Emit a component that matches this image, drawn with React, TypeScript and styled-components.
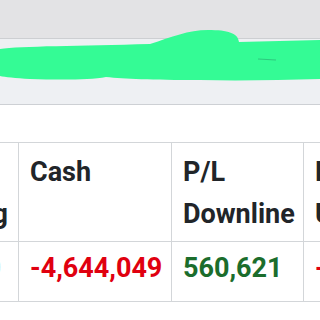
import styled, { createGlobalStyle } from 'styled-components';

const GlobalStyle = createGlobalStyle`
  html, body {
    margin: 0;
    padding: 0;
    background: #ffffff;
  }
  body {
    width: 320px;
    height: 320px;
    overflow: hidden;
    font-family: Roboto, 'Liberation Sans', sans-serif;
  }
`;

const Page = styled.div`
  width: 320px;
  height: 320px;
  overflow: hidden;
  background: #ffffff;
`;

const Header = styled.header`
  position: relative;
`;

const TopBand = styled.div`
  height: 38px;
  background: #e3e3e5;
  border-bottom: 1px solid #cdcfd2;
`;

const SubBand = styled.div`
  height: 65px;
  background: #eef0f3;
  border-bottom: 1px solid #cdd0d4;
`;

// redaction scribble drawn over the header
const Scribble = styled.svg`
  position: absolute;
  left: 0;
  top: 0;
  width: 320px;
  height: 100px;
`;

const TableScroll = styled.div`
  margin-top: 37px;
  overflow: hidden;
`;

const Table = styled.table`
  margin-left: -152px;
  border-collapse: collapse;
  table-layout: fixed;
  width: 605px;
  font-weight: 700;
  font-size: 27px;
  line-height: 42px;
`;

const Th = styled.th<{ $w: number }>`
  box-sizing: border-box;
  width: ${(p) => p.$w}px;
  text-align: left;
  vertical-align: top;
  padding: 8px 10px 6px 11px;
  color: #212529;
  border: 1px solid #d3d6d9;
  font-weight: 700;
`;

const Line = styled.div<{ $align?: 'left' | 'right' }>`
  text-align: ${(p) => p.$align ?? 'left'};
  white-space: nowrap;
`;

const Td = styled.td<{ $tone: 'red' | 'green'; $align?: 'left' | 'right'; $padRight?: number }>`
  text-align: ${(p) => p.$align ?? 'left'};
  padding: 5px ${(p) => p.$padRight ?? 10}px 12px 11px;
  color: ${(p) => (p.$tone === 'red' ? '#e0000f' : '#1b6d2c')};
  border: 1px solid #d3d6d9;
  white-space: nowrap;
  overflow: hidden;
`;

function App() {
  return (
    <Page>
      <GlobalStyle />
      <Header>
        <TopBand />
        <SubBand />
        <Scribble viewBox="0 0 320 100">
          <path
            d="M0,49 C20,46 80,46 150,44 C172,37 188,30 208,30 C228,30 238,33 239,42 L320,40 L320,79 C280,80 240,81 200,80 C150,80 125,79 106,77 C90,80 60,80 30,79 C15,78 5,77 0,76 Z"
            fill="#34fb95"
          />
          <path d="M258,59 L276,60" stroke="#2aa870" strokeWidth="1" opacity="0.6" />
        </Scribble>
      </Header>
      <TableScroll>
        <Table>
          <thead>
            <tr>
              <Th $w={170}>
                <Line>Credit</Line>
                <Line $align="right">Remaining</Line>
              </Th>
              <Th $w={153}>Cash</Th>
              <Th $w={132}>P/L Downline</Th>
              <Th $w={150}>Balance Upline</Th>
            </tr>
          </thead>
          <tbody>
            <tr>
              <Td $tone="green" $align="right" $padRight={17}>
                1,236,100
              </Td>
              <Td $tone="red">-4,644,049</Td>
              <Td $tone="green">560,621</Td>
              <Td $tone="red">-4,083,428</Td>
            </tr>
          </tbody>
        </Table>
      </TableScroll>
    </Page>
  );
}

export default App;
